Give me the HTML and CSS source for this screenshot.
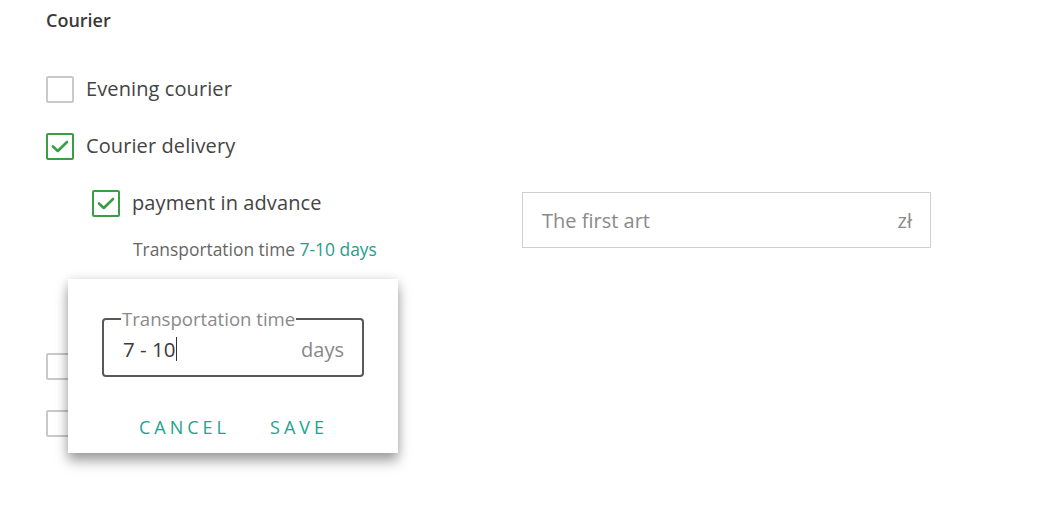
FILE: index.html
```html
<!DOCTYPE html>
<html>
<head>
<meta charset="utf-8">
<link rel="stylesheet" href="styles.css">
</head>
<body>
<div class="page">
  <div class="title">Courier</div>
  <div class="row">
    <span class="box"></span><span class="label">Evening courier</span>
  </div>
  <div class="row">
    <span class="box checked"><svg viewBox="0 0 24 24"><polyline points="5,12.5 9.8,17 19,8"/></svg></span><span class="label">Courier delivery</span>
  </div>
  <div class="nested">
    <div class="nested-left">
      <div class="row row-flush">
        <span class="box checked"><svg viewBox="0 0 24 24"><polyline points="5,12.5 9.8,17 19,8"/></svg></span><span class="label">payment in advance</span>
      </div>
      <div class="helper">Transportation time <span class="accent">7-10 days</span></div>
    </div>
    <div class="price">
      <span class="placeholder">The first art</span><span class="unit">zł</span>
    </div>
  </div>
  <div class="row row-hidden1"><span class="box"></span></div>
  <div class="row row-hidden2"><span class="box"></span></div>

  <div class="popup">
    <fieldset class="field">
      <legend>Transportation time</legend>
      <div class="field-inner"><span class="value">7 - 10</span><span class="caret"></span><span class="days">days</span></div>
    </fieldset>
    <div class="actions">
      <span class="btn">CANCEL</span><span class="btn">SAVE</span>
    </div>
  </div>
</div>
</body>
</html>
```
FILE: styles.css
```css
* { box-sizing: border-box; }
html, body { margin: 0; padding: 0; background: #fff; }
body {
  font-family: "Open Sans", "Noto Sans", sans-serif;
  color: #333;
  width: 1038px;
  height: 531px;
  overflow: hidden;
}
.page {
  position: relative;
  padding: 10px 0 0 46px;
  height: 531px;
}
.title {
  font-size: 18px;
  line-height: 20px;
  font-weight: 600;
  color: #3a3a3a;
  margin-bottom: 45px;
}
.row {
  display: flex;
  align-items: center;
  height: 28px;
  margin-bottom: 29px;
}
.row-flush { margin-bottom: 0; }
.box {
  width: 28px;
  height: 27px;
  border: 2px solid #c9c9c9;
  border-radius: 2px;
  display: flex;
  align-items: center;
  justify-content: center;
  flex: none;
}
.box.checked { border-color: #3a9e45; }
.box svg { width: 24px; height: 24px; }
.box svg polyline {
  fill: none;
  stroke: #3a9e45;
  stroke-width: 2.6;
  stroke-linecap: round;
  stroke-linejoin: round;
}
.label {
  margin-left: 12px;
  margin-top: -2px;
  font-size: 20px;
  color: #444;
  letter-spacing: 0.1px;
}
.nested {
  display: flex;
  align-items: flex-start;
  padding-left: 46px;
}
.nested-left { width: 430px; }
.helper {
  margin-top: 22px;
  margin-left: 41px;
  font-size: 17.4px;
  line-height: 20px;
  color: #666;
}
.accent { color: #1f9d8b; }
.price {
  margin-top: 3px;
  width: 409px;
  height: 56px;
  border: 1px solid #cfcfcf;
  display: flex;
  align-items: center;
  justify-content: space-between;
  padding: 0 18px 0 19px;
  font-size: 20px;
  color: #8a8a8a;
}
.row-hidden1 { margin-top: 93px; }
.popup {
  position: absolute;
  left: 68px;
  top: 279px;
  width: 330px;
  height: 174px;
  background: #fff;
  box-shadow: 0 8px 12px rgba(0,0,0,0.36), 0 0 10px rgba(0,0,0,0.10);
  padding: 32px 34px 0 34px;
}
.field {
  margin: 0;
  width: 262px;
  height: 66px;
  border: 2px solid #585858;
  border-radius: 4px;
  padding: 0 18px 0 19px;
}
.field legend {
  font-size: 18.6px;
  line-height: 16px;
  color: #8a8a8a;
  padding: 0 1px;
  margin-left: -2px;
}
.field-inner {
  display: flex;
  align-items: center;
  height: 42px;
  margin-top: 1px;
  font-size: 20.5px;
}
.value { color: #3a3a3a; }
.caret {
  width: 1px;
  height: 24px;
  background: #333;
  margin-left: 1px;
}
.days { margin-left: auto; color: #888; font-size: 20px; }
.actions {
  display: flex;
  gap: 40px;
  padding-left: 37px;
  margin-top: 38px;
}
.btn {
  font-size: 18px;
  letter-spacing: 4px;
  color: #22a28e;
  font-weight: 500;
}
```
